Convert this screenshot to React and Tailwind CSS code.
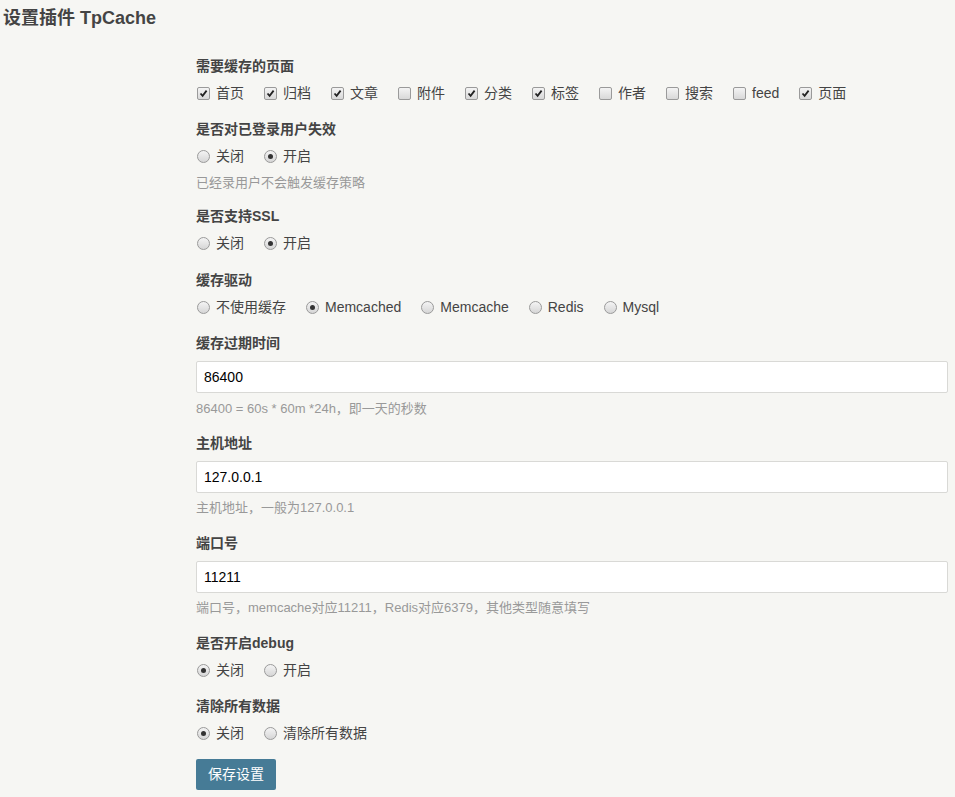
import React from 'react';

const FONT = "'Liberation Sans', 'Noto Sans CJK SC', sans-serif";

function Box({ checked }) {
  return (
    <span className="flex h-[13px] w-[13px] shrink-0 items-center justify-center rounded-[2px] border border-[#9a9a9a] bg-gradient-to-b from-[#f4f4f4] to-[#d8d8d8]">
      {checked && (
        <svg width="9" height="9" viewBox="0 0 9 9" className="block">
          <path d="M1.5 4.5 L3.6 6.8 L7.6 1.6" fill="none" stroke="#222" strokeWidth="1.8" />
        </svg>
      )}
    </span>
  );
}

function Radio({ checked }) {
  return (
    <span className="flex h-[13px] w-[13px] shrink-0 items-center justify-center rounded-full border border-[#9a9a9a] bg-gradient-to-b from-[#f4f4f4] to-[#d6d6d6]">
      {checked && <span className="block h-[5px] w-[5px] rounded-full bg-[#333]" />}
    </span>
  );
}

function Options({ items, type }) {
  return (
    <div className="flex h-5 items-center">
      {items.map(([text, on]) => (
        <span key={text} className="mr-[19px] flex items-center text-[14px] leading-5 text-[#444]">
          <span className="ml-px mr-[6px] flex items-center">
            {type === 'radio' ? <Radio checked={on} /> : <Box checked={on} />}
          </span>
          {text}
        </span>
      ))}
    </div>
  );
}

function Label({ children }) {
  return <div className="mb-[7px] text-[14px] font-bold leading-5 text-[#444]">{children}</div>;
}

function Desc({ children, mt = 'mt-[6px]' }) {
  return <div className={`${mt} text-[13px] leading-5 text-[#999]`}>{children}</div>;
}

function Field({ value }) {
  return (
    <div className="mt-[8px] flex h-8 items-center rounded-[2px] border border-[#d9d9d6] bg-white px-[7px] text-[14px] text-black">
      {value}
    </div>
  );
}

export default function App() {
  const pages = [
    ['首页', true], ['归档', true], ['文章', true], ['附件', false], ['分类', true],
    ['标签', true], ['作者', false], ['搜索', false], ['feed', false], ['页面', true],
  ];

  return (
    <div className="min-h-screen bg-[#F6F6F3]" style={{ fontFamily: FONT }}>
      <h2 className="pl-[3px] pt-[6px] text-[18px] font-bold leading-6 text-[#444]">设置插件 TpCache</h2>

      <div className="pl-[196px] pr-[7px] pt-[26px] pb-4">
        <div className="mb-[16px]">
          <Label>需要缓存的页面</Label>
          <Options items={pages} type="checkbox" />
        </div>

        <div className="mb-[13px]">
          <Label>是否对已登录用户失效</Label>
          <Options items={[['关闭', false], ['开启', true]]} type="radio" />
          <Desc mt="mt-[7px]">已经录用户不会触发缓存策略</Desc>
        </div>

        <div className="mb-[17px]">
          <Label>是否支持SSL</Label>
          <Options items={[['关闭', false], ['开启', true]]} type="radio" />
        </div>

        <div className="mb-[16px]">
          <Label>缓存驱动</Label>
          <Options
            items={[['不使用缓存', false], ['Memcached', true], ['Memcache', false], ['Redis', false], ['Mysql', false]]}
            type="radio"
          />
        </div>

        <div className="mb-[14px]">
          <Label>缓存过期时间</Label>
          <Field value="86400" />
          <Desc>86400 = 60s * 60m *24h，即一天的秒数</Desc>
        </div>

        <div className="mb-[15px]">
          <Label>主机地址</Label>
          <Field value="127.0.0.1" />
          <Desc mt="mt-[5px]">主机地址，一般为127.0.0.1</Desc>
        </div>

        <div className="mb-[15px]">
          <Label>端口号</Label>
          <Field value="11211" />
          <Desc mt="mt-[5px]">端口号，memcache对应11211，Redis对应6379，其他类型随意填写</Desc>
        </div>

        <div className="mb-[16px]">
          <Label>是否开启debug</Label>
          <Options items={[['关闭', true], ['开启', false]]} type="radio" />
        </div>

        <div className="mb-[16px]">
          <Label>清除所有数据</Label>
          <Options items={[['关闭', true], ['清除所有数据', false]]} type="radio" />
        </div>

        <button className="h-[31px] w-20 rounded-[2px] bg-[#467B96] text-[14px] text-white">保存设置</button>
      </div>
    </div>
  );
}
